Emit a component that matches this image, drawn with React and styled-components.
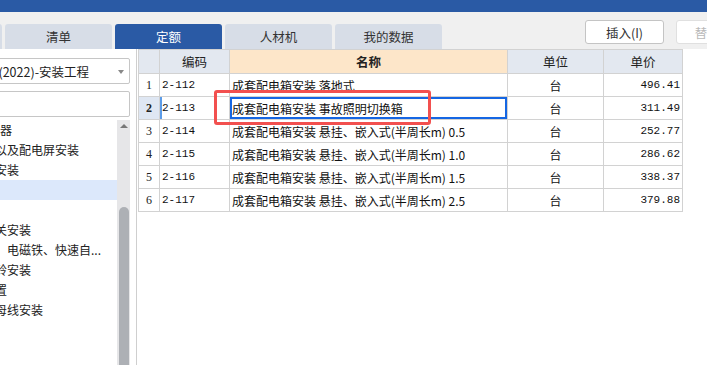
import React from 'react';
import styled, { createGlobalStyle } from 'styled-components';

const GlobalStyle = createGlobalStyle`
  html, body {
    margin: 0;
    padding: 0;
    background: #ffffff;
  }
  * {
    box-sizing: border-box;
  }
`;

const UI_FONT = `"Noto Sans CJK SC", "Noto Sans", sans-serif`;
const MONO_FONT = `"Liberation Mono", "DejaVu Sans Mono", monospace`;

const tabs = [
  { label: '', active: false },
  { label: '清单', active: false },
  { label: '定额', active: true },
  { label: '人材机', active: false },
  { label: '我的数据', active: false },
];

// the tree is scrolled sideways, so each label starts a little left of the edge
const treeItems = [
  { text: '电器', indent: -12 },
  { text: '柜以及配电屏安装', indent: -17 },
  { text: '箱安装', indent: -17 },
  { text: '', indent: 0, selected: true },
  { text: '', indent: 0 },
  { text: '开关安装', indent: -17 },
  { text: '器、电磁铁、快速自...', indent: -17 },
  { text: '电铃安装', indent: -17 },
  { text: '装置', indent: -17 },
  { text: '小母线安装', indent: -17 },
];

const rows = [
  { no: 1, code: '2-112', name: '成套配电箱安装 落地式', unit: '台', price: '496.41' },
  { no: 2, code: '2-113', name: '成套配电箱安装 事故照明切换箱', unit: '台', price: '311.49', selected: true },
  { no: 3, code: '2-114', name: '成套配电箱安装 悬挂、嵌入式(半周长m) 0.5', unit: '台', price: '252.77' },
  { no: 4, code: '2-115', name: '成套配电箱安装 悬挂、嵌入式(半周长m) 1.0', unit: '台', price: '286.62' },
  { no: 5, code: '2-116', name: '成套配电箱安装 悬挂、嵌入式(半周长m) 1.5', unit: '台', price: '338.37' },
  { no: 6, code: '2-117', name: '成套配电箱安装 悬挂、嵌入式(半周长m) 2.5', unit: '台', price: '379.88' },
];

const App = () => {
  return (
    <Page>
      <GlobalStyle />
      <TopBar />
      <TabRow>
        <Tabs>
          {tabs.map((t, i) => (
            <Tab key={i} $active={t.active}>{t.label}</Tab>
          ))}
        </Tabs>
        <Buttons>
          <ToolButton>插入(I)</ToolButton>
          <ToolButton $disabled>替换(R)</ToolButton>
        </Buttons>
      </TabRow>
      <Body>
        <LeftPanel>
          <Select>
            <SelectText>全国统一安装工程预算定额(2022)-安装工程</SelectText>
            <SelectArrow />
          </Select>
          <SearchInput />
          <TreeArea>
            <TreeList>
              {treeItems.map((item, i) => (
                <TreeItem key={i} $indent={item.indent} $selected={item.selected}>
                  {item.text}
                </TreeItem>
              ))}
            </TreeList>
            <ScrollBar>
              <ScrollArrow />
              <ScrollThumb />
            </ScrollBar>
          </TreeArea>
        </LeftPanel>
        <RightPanel>
          <Grid>
            <HeadCell />
            <HeadCell>编码</HeadCell>
            <HeadCell $peach $bold>名称</HeadCell>
            <HeadCell>单位</HeadCell>
            <HeadCell>单价</HeadCell>
            {rows.map((r) => (
              <React.Fragment key={r.no}>
                <NoCell $selected={r.selected}>{r.no}</NoCell>
                <Cell $mono $marker={r.selected}>{r.code}</Cell>
                <Cell $focus={r.selected}>{r.name}</Cell>
                <Cell $align="center">{r.unit}</Cell>
                <Cell $mono $align="flex-end">{r.price}</Cell>
              </React.Fragment>
            ))}
          </Grid>
          <Annotation />
        </RightPanel>
      </Body>
    </Page>
  );
};

export default App;

const Page = styled.div`
  width: 707px;
  height: 365px;
  overflow: hidden;
  display: flex;
  flex-direction: column;
  background: #f0f0f0;
  font-family: ${UI_FONT};
  color: #333;
`;

const TopBar = styled.div`
  height: 12px;
  flex-shrink: 0;
  background: #2a5aa5;
`;

const TabRow = styled.div`
  height: 37px;
  flex-shrink: 0;
  display: flex;
  padding-top: 12px;
`;

const Tabs = styled.div`
  display: flex;
  gap: 3px;
  margin-left: -105px;
  flex-shrink: 0;
`;

const Tab = styled.div`
  width: 107px;
  height: 25px;
  display: flex;
  align-items: center;
  justify-content: center;
  border-radius: 3px 3px 0 0;
  font-size: 12.5px;
  background: ${(p) => (p.$active ? '#2a5aa5' : '#d7dde7')};
  color: ${(p) => (p.$active ? '#ffffff' : '#333')};
`;

const Buttons = styled.div`
  display: flex;
  gap: 12px;
  margin-left: 143px;
  margin-top: -4px;
  flex-shrink: 0;
`;

const ToolButton = styled.div`
  width: 79px;
  height: 24px;
  display: flex;
  align-items: center;
  justify-content: center;
  font-size: 12.5px;
  background: #fff;
  border: 1px solid ${(p) => (p.$disabled ? '#e0e0e0' : '#c4c4c4')};
  border-radius: 3px;
  color: ${(p) => (p.$disabled ? '#b8b8b8' : '#333')};
  flex-shrink: 0;
`;

const Body = styled.div`
  flex: 1;
  display: flex;
  background: #fff;
  min-height: 0;
`;

const LeftPanel = styled.div`
  width: 136px;
  flex-shrink: 0;
  display: flex;
  flex-direction: column;
  gap: 7px;
  padding: 9px 6px 0 0;
  overflow: hidden;
`;

const Select = styled.div`
  height: 26px;
  margin-left: -12px;
  flex-shrink: 0;
  display: flex;
  align-items: center;
  border: 1px solid #c6c6c6;
  border-radius: 2px;
  background: #fff;
  position: relative;
  overflow: hidden;
  direction: rtl;
  padding-right: 40px;
`;

const SelectText = styled.span`
  font-size: 12.5px;
  white-space: nowrap;
  color: #222;
  direction: ltr;
  unicode-bidi: plaintext;
`;

const SelectArrow = styled.span`
  position: absolute;
  right: 5px;
  top: 11px;
  border-left: 3.5px solid transparent;
  border-right: 3.5px solid transparent;
  border-top: 4px solid #888;
`;

const SearchInput = styled.div`
  height: 26px;
  margin-left: -12px;
  flex-shrink: 0;
  border: 1px solid #c6c6c6;
  border-radius: 2px;
  background: #fff;
`;

const TreeArea = styled.div`
  flex: 1;
  display: flex;
  margin-top: -4px;
  min-height: 0;
`;

const TreeList = styled.div`
  flex: 1;
  min-width: 0;
  overflow: hidden;
`;

const TreeItem = styled.div`
  height: 20px;
  line-height: 20px;
  font-size: 12px;
  color: #222;
  white-space: nowrap;
  overflow: hidden;
  text-indent: ${(p) => p.$indent}px;
  background: ${(p) => (p.$selected ? '#dce8fb' : 'transparent')};
`;

const ScrollBar = styled.div`
  width: 13px;
  flex-shrink: 0;
  background: #e6e6e8;
  display: flex;
  flex-direction: column;
  align-items: center;
  padding-top: 4px;
`;

const ScrollArrow = styled.span`
  border-left: 4px solid transparent;
  border-right: 4px solid transparent;
  border-bottom: 4px solid #777;
`;

const ScrollThumb = styled.div`
  width: 10px;
  flex: 1;
  margin-top: 79px;
  margin-bottom: -20px;
  background: #adb0b5;
  border-radius: 5px 5px 0 0;
`;

const RightPanel = styled.div`
  flex: 1;
  position: relative;
  border-left: 1px solid #cfcfcf;
  padding-left: 1px;
`;

const Grid = styled.div`
  display: grid;
  grid-template-columns: 21px 70px 278px 96px 79px;
  grid-template-rows: 24px repeat(6, 23px);
  border-left: 1px solid #d2d2d2;
  border-top: 1px solid #d2d2d2;
  width: max-content;
`;

const CellBase = styled.div`
  display: flex;
  align-items: center;
  border-right: 1px solid #d2d2d2;
  border-bottom: 1px solid #d2d2d2;
  white-space: nowrap;
  overflow: hidden;
`;

const HeadCell = styled(CellBase)`
  justify-content: center;
  font-size: 12.5px;
  font-weight: ${(p) => (p.$bold ? 700 : 400)};
  background: ${(p) => (p.$peach ? '#fde6c9' : '#e3e8f0')};
  color: #222;
`;

const NoCell = styled(CellBase)`
  justify-content: center;
  font-family: "Liberation Serif", "DejaVu Serif", serif;
  font-size: 12px;
  font-weight: ${(p) => (p.$selected ? 700 : 400)};
  background: ${(p) => (p.$selected ? '#dfe7f3' : '#fff')};
  color: #222;
`;

const Cell = styled(CellBase)`
  justify-content: ${(p) => p.$align || 'flex-start'};
  padding: 0 2px;
  font-family: ${(p) => (p.$mono ? MONO_FONT : UI_FONT)};
  font-size: ${(p) => (p.$mono ? '11px' : '12px')};
  color: #111;
  box-shadow: ${(p) =>
    p.$focus ? 'inset 0 0 0 2px #1566e3' : p.$marker ? 'inset 2px 0 0 #5c9ce8' : 'none'};
`;

const Annotation = styled.div`
  position: absolute;
  left: 77px;
  top: 41px;
  width: 217px;
  height: 35px;
  border: 3px solid #f2504f;
  border-radius: 3px;
  pointer-events: none;
`;
